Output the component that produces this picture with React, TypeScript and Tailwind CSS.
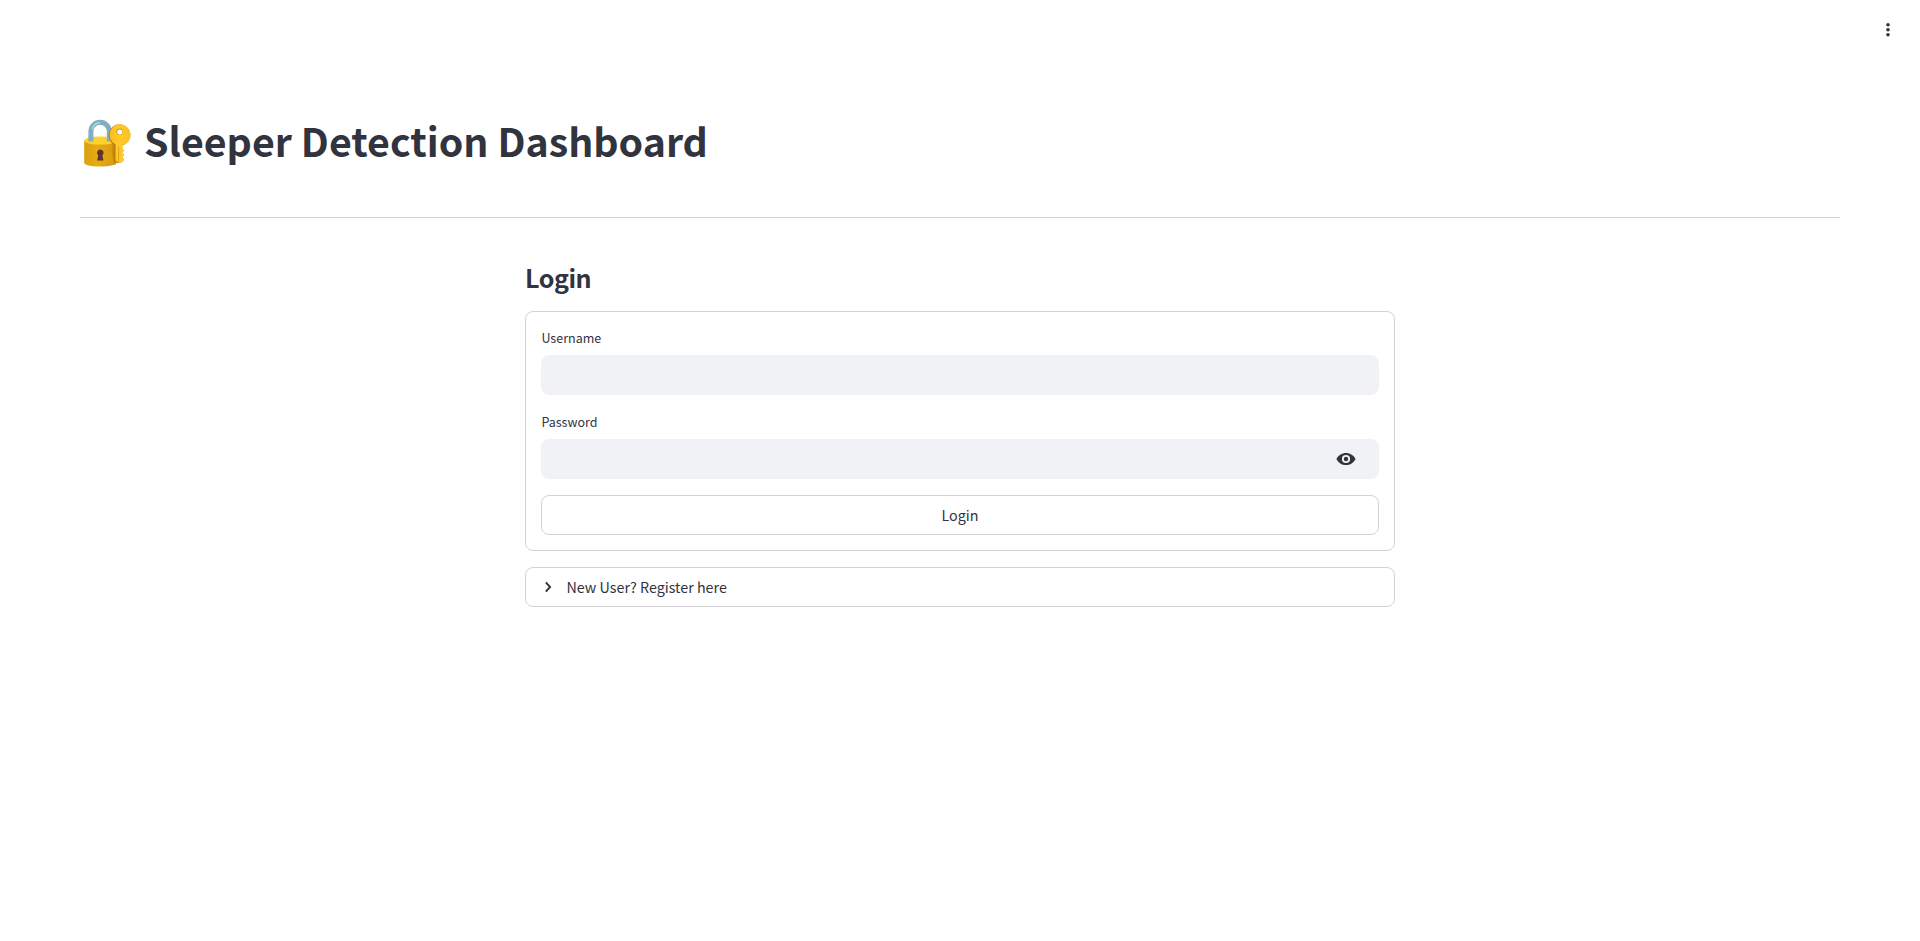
import React from "react";

function LockKeyIcon() {
  return (
    <svg className="block h-[52px] w-[52px] shrink-0" viewBox="0 0 52 52" aria-hidden="true">
      <defs>
        <linearGradient id="lockBody" x1="0" y1="0" x2="1" y2="0">
          <stop offset="0" stopColor="#dd9f10" />
          <stop offset="0.4" stopColor="#e6ab12" />
          <stop offset="1" stopColor="#d99b0e" />
        </linearGradient>
        <linearGradient id="keyFill" x1="0" y1="0" x2="1" y2="0">
          <stop offset="0" stopColor="#f6bb20" />
          <stop offset="0.4" stopColor="#ffca28" />
          <stop offset="1" stopColor="#fbc224" />
        </linearGradient>
      </defs>
      <path d="M4.200 22.500v22.200c0 2.300 7 3.900 16 3.900s16-1.600 16-3.900V22.500z" fill="url(#lockBody)" />
      <ellipse cx="20.200" cy="22.600" rx="16" ry="4" fill="#fdd22f" />
      <path d="M10.900 23.500V13.400a9.200 9.200 0 0 1 18.400 0v10.100" fill="none" stroke="#82aec0" strokeWidth="5" />
      <path d="M12.500 10.500a8.500 8.500 0 0 1 6.500-5.700" fill="none" stroke="#afd5e0" strokeWidth="1.600" strokeLinecap="round" />
      <path d="M20.300 31.400a3.300 3.300 0 0 0-2 5.900l-1.200 5.300h6.400l-1.200-5.300a3.300 3.300 0 0 0-2-5.900z" fill="#5d3430" />
      <path d="M32.600 25.500c-.8 7-.3 15 2 21.500l1.600-1V25z" fill="#bf820b" opacity=".75" />
      <path
        d="M40.200 6.100a11 11 0 0 0-5.400 20.500v15.800l3.200 2.700 4.200-1 1.500-3.100-1.400-1.800 1.800-2.300-1.600-2.200 1.500-2-1.600-2.300v-2.600A11 11 0 0 0 40.200 6.100z"
        fill="#b97a12"
        transform="translate(-.6 .1)"
      />
      <path
        d="M40.200 6.300a10.600 10.600 0 0 0-4.700 20.100v16.100l3.200 2.200 4.500-1 1-3-1.700-1.700 1.800-2.200-1.700-2.200 1.700-2-1.700-2.200v-3.200A10.600 10.600 0 0 0 40.200 6.300z"
        fill="url(#keyFill)"
      />
      <circle cx="39.500" cy="13.700" r="3.100" fill="#c98f1b" />
      <circle cx="39.700" cy="14" r="2.500" fill="#ffffff" />
      <path d="M38.600 29v14" stroke="#dda31a" strokeWidth="1" strokeLinecap="round" />
    </svg>
  );
}

function EyeIcon() {
  return (
    <svg className="h-5 w-5" viewBox="0 0 20 20" fill="currentColor" aria-hidden="true">
      <path
        fillRule="evenodd"
        d="M10 3.900C5.900 3.900 2.200 6.200.4 10c1.800 3.800 5.500 6.100 9.600 6.100s7.800-2.300 9.600-6.100C17.800 6.200 14.100 3.900 10 3.900zm0 2a4.100 4.100 0 1 1 0 8.200 4.100 4.100 0 0 1 0-8.200z"
      />
      <circle cx="10" cy="10" r="2.200" />
    </svg>
  );
}

function MenuDots() {
  return (
    <svg className="h-5 w-5" viewBox="0 0 20 20" fill="currentColor" aria-hidden="true">
      <circle cx="10" cy="4.800" r="1.800" />
      <circle cx="10" cy="9.800" r="1.800" />
      <circle cx="10" cy="14.800" r="1.800" />
    </svg>
  );
}

function Field({ label, type }: { label: string; type: "text" | "password" }) {
  return (
    <label className="block">
      <span className="mb-[7px] block h-[21px] pl-[0.4px] text-[12.53px] leading-[21px]">{label}</span>
      <span className="flex h-10 items-center rounded-lg bg-[#f0f2f6]">
        <input type={type} className="h-full min-w-0 flex-1 bg-transparent px-3 text-[14.3px] outline-none" />
        {type === "password" && (
          <button type="button" aria-label="Show password" className="mr-[23px]">
            <EyeIcon />
          </button>
        )}
      </span>
    </label>
  );
}

export default function App() {
  return (
    <div className="flex min-h-[941px] flex-col bg-white font-['Noto_Sans_CJK_SC','Noto_Sans',sans-serif] text-[14.32px] text-[#31333f]">
      <header className="flex h-[60px] items-center justify-end pr-[22px]">
        <button type="button" aria-label="Menu">
          <MenuDots />
        </button>
      </header>
      <main className="px-20 pt-[50px]">
        <h1 className="flex h-[60px] items-center gap-3 text-[39.32px] leading-[60px] font-bold">
          <span className="pt-2">
            <LockKeyIcon />
          </span>
          <span>Sleeper Detection Dashboard</span>
        </h1>
        <div role="separator" className="mt-[47px] h-px bg-[#d3d3d6]" />
        <section className="mx-auto mt-[39px] w-[870px]">
          <h3 className="h-10 text-[25.07px] leading-10 font-semibold tracking-[-0.45px]">Login</h3>
          <form className="mt-[14px] flex flex-col gap-4 rounded-lg border border-[#d3d3d6] p-[15px]">
            <Field label="Username" type="text" />
            <Field label="Password" type="password" />
            <button type="button" className="h-10 rounded-lg border border-[#d3d3d6]">
              Login
            </button>
          </form>
          <button type="button" className="mt-4 flex h-10 w-full items-center rounded-lg border border-[#d3d3d6] pl-3">
            <svg className="h-5 w-5" viewBox="0 0 20 20" fill="none" stroke="currentColor" strokeWidth="1.900" aria-hidden="true">
              <path d="M7.800 5.300 12.100 10l-4.300 4.700" />
            </svg>
            <span className="ml-[8.5px]">New User? Register here</span>
          </button>
        </section>
      </main>
    </div>
  );
}
